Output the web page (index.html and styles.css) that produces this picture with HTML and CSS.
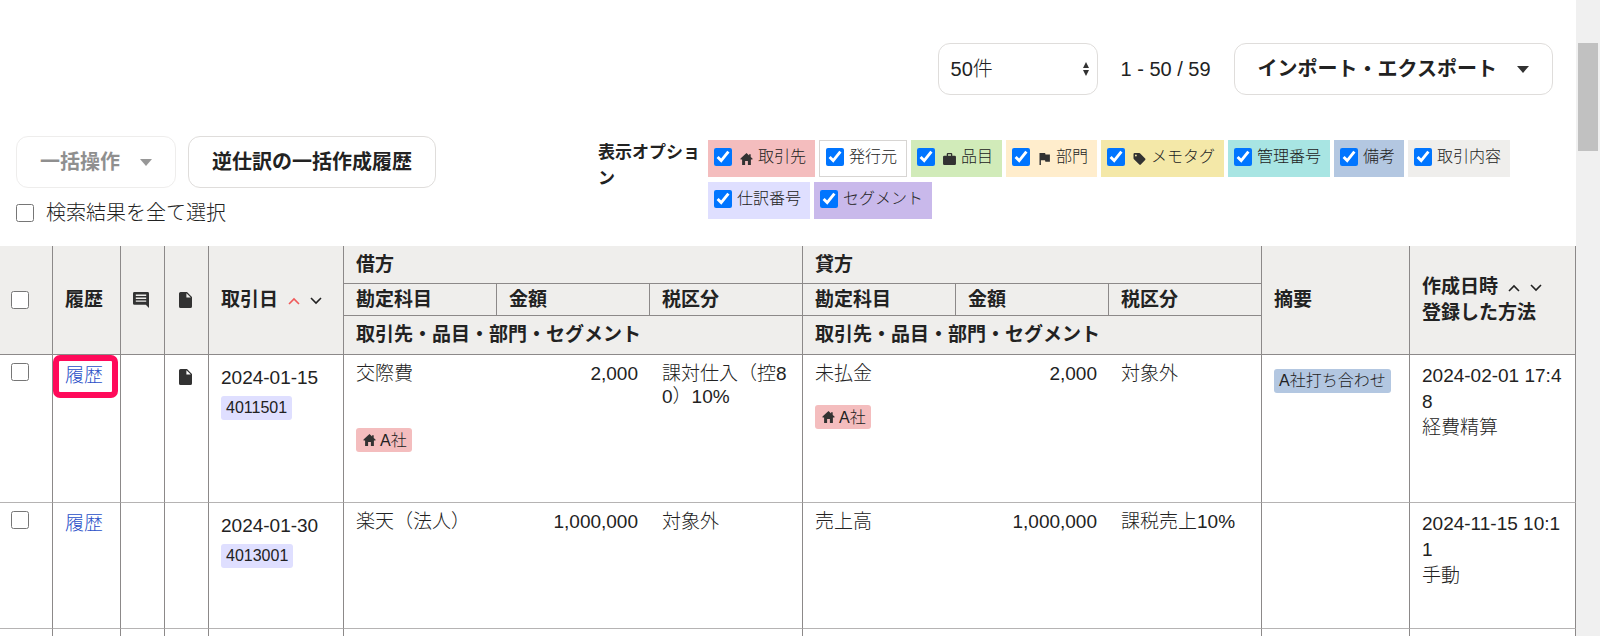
FILE: index.html
```html
<!DOCTYPE html>
<html lang="ja">
<head>
    <meta charset="UTF-8">
    <meta name="viewport" content="width=device-width, initial-scale=1.0">
    <title>仕訳帳</title>
    <link rel="stylesheet" href="styles.css">
</head>
<body>

    <svg class="sprite" aria-hidden="true">
        <symbol id="home" viewBox="0 0 12 12"><path d="M6 0 0 5.6V6.4H1.6V12H4.6V8H7.4V12H10.4V6.4H12V5.6L10.2 3.9V1.2H8.6V2.4Z"/></symbol>
        <symbol id="bag" viewBox="0 0 14 13"><path d="M4 3V1.2Q4 0 5.2 0H8.8Q10 0 10 1.2V3H12.6Q14 3 14 4.4V11.6Q14 13 12.6 13H1.4Q0 13 0 11.6V4.4Q0 3 1.4 3ZM5.4 3H8.6V1.4H5.4Z"/></symbol>
        <symbol id="flag" viewBox="0 0 12 12"><path d="M1 0H6.6L7 1.6H11.4V8.8H6.9L6.5 7.2H2.4V12H1Z"/></symbol>
        <symbol id="tag" viewBox="0 0 13 13"><path fill-rule="evenodd" d="M1.3 0H6Q6.6 0 7 .4L12.6 6Q13.3 6.8 12.6 7.6L7.9 12.5Q7.1 13.3 6.3 12.5L.5 6.8Q0 6.3 0 5.8V1.3Q0 0 1.3 0ZM2.6 1.7A1 1 0 1 0 2.6 3.7 1 1 0 1 0 2.6 1.7Z"/></symbol>
        <symbol id="comment" viewBox="0 0 16 16"><path fill-rule="evenodd" d="M1.4 0H14.6Q16 0 16 1.4V16L12.8 12.8H1.4Q0 12.8 0 11.4V1.4Q0 0 1.4 0ZM2.8 2.6V4H13.2V2.6ZM2.8 5.5V6.9H13.2V5.5ZM2.8 8.4V9.8H13.2V8.4Z"/></symbol>
        <symbol id="file" viewBox="0 0 13 16"><path fill-rule="evenodd" d="M1.6 0H8L13 5V14.4Q13 16 11.4 16H1.6Q0 16 0 14.4V1.6Q0 0 1.6 0ZM7.4 1.2V5.6H11.8Z"/></symbol>
        <symbol id="up" viewBox="0 0 12 8"><path d="M1 7 6 2 11 7" fill="none" stroke="currentColor" stroke-width="1.6"/></symbol>
        <symbol id="down" viewBox="0 0 12 8"><path d="M1 1 6 6 11 1" fill="none" stroke="currentColor" stroke-width="1.6"/></symbol>
        <symbol id="caret" viewBox="0 0 12 7"><path d="M0 0H12L6 7Z"/></symbol>
        <symbol id="updown" viewBox="0 0 6 14"><path d="M3 0 6 6H0ZM0 8H6L3 14Z"/></symbol>
    </svg>

    <div class="page">
        <main class="main">
            <div class="pager">
                <div class="select-box">
                    <select aria-label="表示件数">
                        <option>50件</option>
                    </select>
                    <svg class="select-arrow"><use href="#updown"/></svg>
                </div>
                <span>1 - 50 / 59</span>
                <button class="btn">インポート・エクスポート <svg class="caret"><use href="#caret"/></svg></button>
            </div>

            <div class="toolbar">
                <div class="bulk">
                    <div class="buttons">
                        <button class="btn" disabled>一括操作 <svg class="caret"><use href="#caret"/></svg></button>
                        <button class="btn">逆仕訳の一括作成履歴</button>
                    </div>
                    <label class="select-all"><input type="checkbox"> 検索結果を全て選択</label>
                </div>
                <div class="options">
                    <div class="options-title">表示オプション</div>
                    <div class="chips">
                        <label class="chip partner"><input type="checkbox" checked><svg class="icon"><use href="#home"/></svg>取引先</label>
                        <label class="chip issuer"><input type="checkbox" checked>発行元</label>
                        <label class="chip item"><input type="checkbox" checked><svg class="icon"><use href="#bag"/></svg>品目</label>
                        <label class="chip section"><input type="checkbox" checked><svg class="icon"><use href="#flag"/></svg>部門</label>
                        <label class="chip memo"><input type="checkbox" checked><svg class="icon"><use href="#tag"/></svg>メモタグ</label>
                        <label class="chip manage"><input type="checkbox" checked>管理番号</label>
                        <label class="chip note"><input type="checkbox" checked>備考</label>
                        <label class="chip content"><input type="checkbox" checked>取引内容</label>
                        <label class="chip number"><input type="checkbox" checked>仕訳番号</label>
                        <label class="chip segment"><input type="checkbox" checked>セグメント</label>
                    </div>
                </div>
            </div>

            <table class="journal">
                <colgroup>
                    <col class="col-check">
                    <col class="col-history">
                    <col class="col-icon">
                    <col class="col-icon">
                    <col class="col-date">
                    <col span="6">
                    <col class="col-note">
                    <col class="col-created">
                </colgroup>
                <thead>
                    <tr>
                        <th rowspan="3" class="check"><input type="checkbox" aria-label="全て選択"></th>
                        <th rowspan="3">履歴</th>
                        <th rowspan="3"><svg class="comment-icon"><use href="#comment"/></svg></th>
                        <th rowspan="3" class="file"><svg class="file-icon"><use href="#file"/></svg></th>
                        <th rowspan="3">取引日<svg class="sort active"><use href="#up"/></svg><svg class="sort"><use href="#down"/></svg></th>
                        <th colspan="3">借方</th>
                        <th colspan="3">貸方</th>
                        <th rowspan="3">摘要</th>
                        <th rowspan="3">作成日時<svg class="sort"><use href="#up"/></svg><svg class="sort"><use href="#down"/></svg><br>登録した方法</th>
                    </tr>
                    <tr class="sub">
                        <th>勘定科目</th>
                        <th>金額</th>
                        <th>税区分</th>
                        <th>勘定科目</th>
                        <th>金額</th>
                        <th>税区分</th>
                    </tr>
                    <tr class="last">
                        <th colspan="3">取引先・品目・部門・セグメント</th>
                        <th colspan="3">取引先・品目・部門・セグメント</th>
                    </tr>
                </thead>
                <tbody>
                    <tr class="tall">
                        <td class="check"><input type="checkbox" aria-label="4011501を選択"></td>
                        <td class="history marked"><a href="#">履歴</a></td>
                        <td></td>
                        <td class="file"><svg class="file-icon"><use href="#file"/></svg></td>
                        <td class="date">2024-01-15<br><span class="badge number">4011501</span></td>
                        <td colspan="3" class="entry">
                            <div class="line"><span>交際費</span><span class="amount">2,000</span><span>課対仕入（控80）10%</span></div>
                            <span class="badge partner"><svg class="icon"><use href="#home"/></svg>A社</span>
                        </td>
                        <td colspan="3" class="entry">
                            <div class="line"><span>未払金</span><span class="amount">2,000</span><span>対象外</span></div>
                            <span class="badge partner"><svg class="icon"><use href="#home"/></svg>A社</span>
                        </td>
                        <td class="summary"><span class="badge note">A社打ち合わせ</span></td>
                        <td>2024-02-01 17:48<br>経費精算</td>
                    </tr>
                    <tr>
                        <td class="check"><input type="checkbox" aria-label="4013001を選択"></td>
                        <td class="history"><a href="#">履歴</a></td>
                        <td></td>
                        <td></td>
                        <td class="date">2024-01-30<br><span class="badge number">4013001</span></td>
                        <td colspan="3" class="entry">
                            <div class="line"><span>楽天（法人）</span><span class="amount">1,000,000</span><span>対象外</span></div>
                        </td>
                        <td colspan="3" class="entry">
                            <div class="line"><span>売上高</span><span class="amount">1,000,000</span><span>課税売上10%</span></div>
                        </td>
                        <td></td>
                        <td>2024-11-15 10:11<br>手動</td>
                    </tr>
                    <tr>
                        <td></td>
                        <td></td>
                        <td></td>
                        <td></td>
                        <td></td>
                        <td colspan="3"></td>
                        <td colspan="3"></td>
                        <td></td>
                        <td></td>
                    </tr>
                </tbody>
            </table>
        </main>
        <div class="scrollbar"><div class="thumb"></div></div>
    </div>

</body>
</html>
```
FILE: styles.css
```css
*, *::after {
    box-sizing: border-box;
}
body {
    margin: 0;
    font-family: "Liberation Sans", "Noto Sans CJK JP", sans-serif;
    font-size: 20px;
    font-weight: 300;
    line-height: 26px;
    color: #222;
    background-color: #fff;
}
.sprite {
    display: none;
}
svg {
    fill: #323232;
}
.page {
    display: flex;
    height: 100vh;
    overflow: hidden;
}
.main {
    flex: 1;
    min-width: 0;
}
.scrollbar {
    width: 24px;
    padding: 43px 2px 0;
    background-color: #f0f0f0;
}
.thumb {
    height: 108px;
    background-color: #c1c1c1;
}

/* toolbar */
.pager {
    display: flex;
    justify-content: flex-end;
    align-items: center;
    gap: 23px;
    padding: 43px 23px 0 16px;
}
.select-box {
    position: relative;
    width: 160px;
}
.select-box select {
    appearance: none;
    width: 100%;
    height: 52px;
    padding: 0 12px;
    border: 1px solid #dfdddb;
    border-radius: 12px;
    background-color: #fff;
    font: inherit;
    color: inherit;
}
.select-arrow {
    position: absolute;
    right: 9px;
    top: 19px;
    width: 6px;
    height: 14px;
}
.btn {
    display: flex;
    align-items: center;
    gap: 20px;
    height: 52px;
    padding: 0 23px;
    border: 1px solid #dfdddb;
    border-radius: 12px;
    background-color: #fff;
    font: inherit;
    font-weight: bold;
    color: #222;
    cursor: pointer;
}
.btn:disabled {
    opacity: 0.5;
    cursor: default;
}
.caret {
    width: 12px;
    height: 7px;
}
.toolbar {
    display: grid;
    grid-template-columns: 582fr 955fr;
    padding: 41px 23px 20px 16px;
}
.buttons {
    display: flex;
    gap: 12px;
}
.select-all {
    display: flex;
    align-items: center;
    gap: 12px;
    margin-top: 12px;
}
input[type="checkbox"] {
    width: 18px;
    height: 18px;
    margin: 0;
}
.options {
    display: flex;
    gap: 8px;
    padding-top: 4px;
}
.options-title {
    width: 102px;
    font-size: 17px;
    font-weight: bold;
    word-break: break-all;
}
.chips {
    flex: 1;
    display: flex;
    flex-wrap: wrap;
    align-content: flex-start;
    gap: 5px 4px;
}
.chip {
    display: flex;
    align-items: center;
    gap: 5px;
    height: 37px;
    padding: 0 9px 4px 6px;
    font-size: 16px;
}
.icon {
    width: 13px;
    height: 12px;
}
.chip .icon {
    margin: 4px 0 0 3px;
}
.partner {
    background-color: #f4bdbe;
}
.issuer {
    border: 1px solid #d7d5d3;
}
.item {
    background-color: #d1ebb9;
}
.section {
    background-color: #ffedcc;
}
.memo {
    background-color: #f4e8a8;
}
.manage {
    background-color: #a8e5e3;
}
.note {
    background-color: #b3c7e1;
}
.content {
    background-color: #efeeec;
}
.number {
    background-color: #dfdfff;
}
.segment {
    background-color: #c9b9eb;
}

/* table */
.journal {
    width: 100%;
    table-layout: fixed;
    border-collapse: separate;
    border-spacing: 0;
    font-size: 19px;
}
.col-check {
    width: 53px;
}
.col-history {
    width: 68px;
}
.col-icon {
    width: 44px;
}
.col-date {
    width: 135px;
}
.col-note {
    width: 148px;
}
.col-created {
    width: 166px;
}
.journal th {
    height: 38px;
    padding: 0 12px;
    border-right: 1px solid #8c8989;
    border-bottom: 1px solid #8c8989;
    background-color: #efeeec;
    text-align: left;
    font-weight: bold;
}
.journal .sub th {
    height: 32px;
}
.journal .last th {
    height: 39px;
}
.journal td {
    height: 126px;
    padding: 8px 12px;
    border-right: 1px solid #8c8989;
    border-bottom: 1px solid #b5b3b3;
    vertical-align: top;
    word-break: break-all;
}
.journal .tall td {
    height: 148px;
}
.journal .check {
    padding-left: 11px;
}
.check input {
    display: block;
}
.comment-icon {
    display: block;
    width: 16px;
    height: 16px;
}
.file-icon {
    display: block;
    width: 13px;
    height: 16px;
}
.journal .file {
    padding-left: 14px;
}
td .file-icon {
    margin-top: 6px;
}
.sort {
    width: 12px;
    height: 8px;
    margin-left: 10px;
    vertical-align: 1px;
}
.sort.active {
    color: #f05a5a;
}
.history a {
    color: #2a50c8;
    text-decoration: none;
}
.marked {
    position: relative;
}
.marked::after {
    content: "";
    position: absolute;
    top: 0;
    left: 0;
    width: 65px;
    height: 43px;
    border: 6px solid #ff0a5a;
    border-radius: 7px;
    pointer-events: none;
}
.journal .date {
    padding-top: 10px;
}
.badge {
    display: inline-flex;
    align-items: center;
    gap: 4px;
    height: 24px;
    padding: 0 5px;
    border-radius: 3px;
    font-size: 16px;
    white-space: nowrap;
}
.badge.partner {
    padding-left: 7px;
}
.date .badge {
    margin-top: 5px;
}
.journal .entry {
    padding: 7px 0 0 12px;
    line-height: 23px;
}
.line {
    display: grid;
    grid-template-columns: 153fr 153fr 140fr;
    margin-bottom: 20px;
}
.line span {
    padding-right: 12px;
}
.line .amount {
    padding-right: 24px;
    text-align: right;
}
.journal .summary {
    padding-top: 12px;
}
```
